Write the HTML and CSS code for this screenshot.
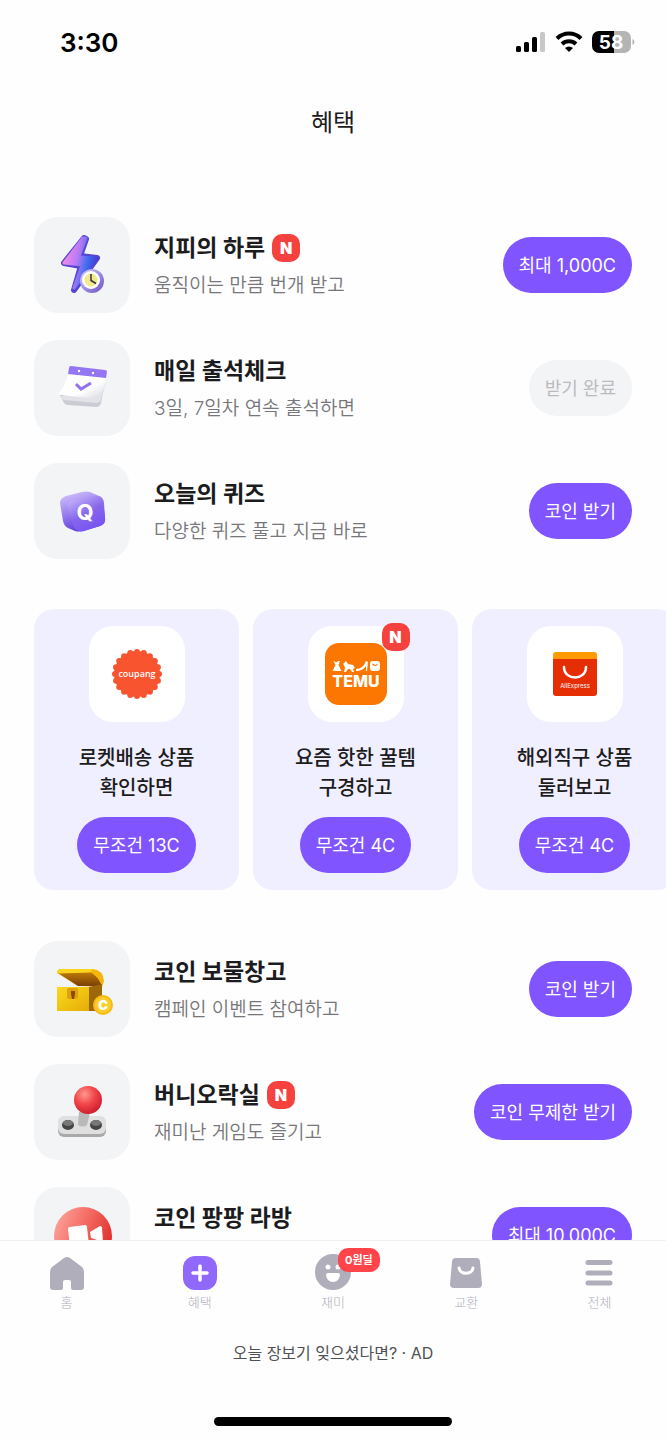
FILE: index.html
```html
<!DOCTYPE html>
<html lang="ko">
<head>
  <meta charset="UTF-8">
  <meta name="viewport" content="width=device-width, initial-scale=1.0">
  <title>혜택</title>
  <link rel="stylesheet" href="styles.css">
</head>
<body>

  <div class="status-bar">
    <span class="time">3:30</span>
    <div class="status-icons">
      <svg width="30" height="22" viewBox="0 0 30 22">
        <rect x="0" y="15" width="5" height="6" rx="1.5"/>
        <rect x="8" y="11" width="5" height="10" rx="1.5"/>
        <rect x="16" y="6" width="5" height="15" rx="1.5"/>
        <rect x="24" y="1" width="5" height="20" rx="1.5" fill="#c8c8c8"/>
      </svg>
      <svg width="28" height="22" viewBox="0 0 28 22">
        <path d="M2 7.500a17 17 0 0 1 24 0M7 13a10.500 10.500 0 0 1 14 0" fill="none" stroke="#000" stroke-width="4"/>
        <path d="M14 21l-4-4a6 6 0 0 1 8 0z"/>
      </svg>
      <svg width="43" height="22" viewBox="0 0 43 22">
        <path d="M22 0H7a7 7 0 0 0-7 7v8a7 7 0 0 0 7 7h15z"/>
        <path d="M22 0h10a7 7 0 0 1 7 7v8a7 7 0 0 1-7 7H22z" fill="#b4b4b4"/>
        <path d="M40.500 8c2.500 1 2.500 5 0 6z" fill="#b4b4b4"/>
        <text class="battery-text" x="19" y="18" text-anchor="middle">58</text>
      </svg>
    </div>
  </div>

  <header>
    <h1>혜택</h1>
  </header>

  <main>
    <ul class="list">
      <li class="row">
        <div class="tile">
          <svg viewBox="0 0 96 96">
            <defs>
              <linearGradient id="bolt" x1="0" y1=".3" x2="1" y2=".6">
                <stop offset="0" stop-color="#f58be8"/>
                <stop offset=".4" stop-color="#b77af5"/>
                <stop offset=".7" stop-color="#3f6cf0"/>
                <stop offset="1" stop-color="#4638c8"/>
              </linearGradient>
              <linearGradient id="ring" x1="0" y1="0" x2="1" y2="1">
                <stop offset="0" stop-color="#d5cdfb"/>
                <stop offset="1" stop-color="#6a50c4"/>
              </linearGradient>
            </defs>
            <path d="M50 21L30 46l17 3-7 24 23-32-17-2 6-17z" fill="url(#bolt)" stroke="#5545cf" stroke-width="6" stroke-linejoin="round"/>
            <path d="M49 21L30 46l18 2-8 23 23-30-18-1 7-19z" fill="url(#bolt)" stroke="url(#bolt)" stroke-width="3" stroke-linejoin="round"/>
            <circle cx="58" cy="64" r="12" fill="url(#ring)"/>
            <circle cx="57" cy="63" r="9" fill="#fff"/>
            <circle cx="57" cy="63" r="6.500" fill="#f2e98a"/>
            <path d="M57 57v6.500l5 3" fill="none" stroke="#33304a" stroke-width="1.500"/>
          </svg>
        </div>
        <div class="info">
          <h2>지피의 하루 <span class="badge">N</span></h2>
          <p>움직이는 만큼 번개 받고</p>
        </div>
        <button class="pill">최대 1,000C</button>
      </li>
      <li class="row">
        <div class="tile">
          <svg viewBox="0 0 96 96">
            <defs>
              <linearGradient id="page" x1="0" y1="0" x2="1" y2="1">
                <stop offset=".6" stop-color="#fff"/>
                <stop offset="1" stop-color="#d8d7e2"/>
              </linearGradient>
            </defs>
            <path d="M26 55l4 8q1 2 4 2l28 2q4 0 5-4l5-26z" fill="#cbcbd3"/>
            <path d="M26 57l4 3 32 3q4 0 5-4l5-16z" fill="#e2e2e8"/>
            <path d="M34 34l38 4q-1 19-17 20L27 55q-3-1-1-3 6-8 8-18z" fill="url(#page)"/>
            <path d="M35 28q0-2 2-2l34 4q2 0 2 2l-1 6-38-4z" fill="#9476f5"/>
            <circle cx="45" cy="31" r="1.200" fill="#fff"/>
            <circle cx="59" cy="33" r="1.200" fill="#fff"/>
            <path d="M42 44l5 5 10-6" fill="none" stroke="#9270f2" stroke-width="3"/>
          </svg>
        </div>
        <div class="info">
          <h2>매일 출석체크</h2>
          <p>3일, 7일차 연속 출석하면</p>
        </div>
        <button class="pill done" disabled>받기 완료</button>
      </li>
      <li class="row">
        <div class="tile">
          <svg viewBox="0 0 96 96">
            <defs>
              <linearGradient id="side" x1="0" y1="0" x2=".4" y2="1">
                <stop offset="0" stop-color="#d9ccfd"/>
                <stop offset="1" stop-color="#5f3be0"/>
              </linearGradient>
              <linearGradient id="face" x1=".2" y1="0" x2=".8" y2="1">
                <stop offset="0" stop-color="#c4b2fa"/>
                <stop offset=".5" stop-color="#8766ea"/>
                <stop offset="1" stop-color="#7550f5"/>
              </linearGradient>
            </defs>
            <path d="M26 40q0-5 6-7l16-4q4-1 8 0l9 4q5 2 5 7l1 15q0 6-5 8l-16 5q-5 1-9 0l-7-3q-4-2-5-7z" fill="url(#side)"/>
            <path d="M34 44q-1-6 5-7l22-4q7-1 8 5l2 17q1 6-5 8l-17 5q-8 1-10-6z" fill="url(#face)"/>
            <text class="quiz-text" x="51" y="57" text-anchor="middle">Q</text>
          </svg>
        </div>
        <div class="info">
          <h2>오늘의 퀴즈</h2>
          <p>다양한 퀴즈 풀고 지금 바로</p>
        </div>
        <button class="pill">코인 받기</button>
      </li>
    </ul>

    <div class="cards">
      <div class="card">
        <div class="tile white">
          <svg viewBox="0 0 96 96">
            <circle cx="48" cy="48" r="23" fill="#f8542f"/>
            <circle cx="48" cy="48" r="22" fill="none" stroke="#f8542f" stroke-width="6" stroke-linecap="round" stroke-dasharray="0 2" pathLength="40"/>
            <text class="coupang-text" x="48" y="51" text-anchor="middle">coupang</text>
          </svg>
        </div>
        <p>로켓배송 상품<br>확인하면</p>
        <button class="pill">무조건 13C</button>
      </div>
      <div class="card">
        <div class="tile white">
          <svg viewBox="0 0 96 96">
            <rect x="17" y="17" width="62" height="62" rx="14" fill="#fb7701"/>
            <g fill="#fff">
              <path d="M26 35l2 1.500 2-1.500h2l-1.500 4 3 6h-9l3-6-2-4z"/>
              <path d="M35 38l3-3 2 3 5 1 2 3-2 1 1 3h-2l-2-3h-2l-2 3h-2l1-4-1-3z"/>
              <path d="M48 43q7 0 10-8l2 1-1 9h-1v-5q-3 5-10 5z"/>
              <path d="M62 38q0-3 3-3h4q3 0 3 3v4q0 3-3 3h-4q-3 0-3-3z"/>
            </g>
            <path d="M64.500 38q3 3 5 0" fill="none" stroke="#fb7701" stroke-width="1.200"/>
            <text class="temu-text" x="48" y="61" text-anchor="middle">TEMU</text>
          </svg>
          <span class="badge corner">N</span>
        </div>
        <p>요즘 핫한 꿀템<br>구경하고</p>
        <button class="pill">무조건 4C</button>
      </div>
      <div class="card">
        <div class="tile white">
          <svg viewBox="0 0 96 96">
            <rect x="26" y="26" width="44" height="20" rx="3" fill="#ff9a00"/>
            <path d="M26 33h44v34q0 3-3 3H29q-3 0-3-3z" fill="#e62e04"/>
            <path d="M37 41c0 14 22 14 22 0" fill="none" stroke="#fff" stroke-width="2.500" stroke-linecap="round"/>
            <text class="ali-text" x="48" y="62" text-anchor="middle">AliExpress</text>
          </svg>
        </div>
        <p>해외직구 상품<br>둘러보고</p>
        <button class="pill">무조건 4C</button>
      </div>
    </div>

    <ul class="list">
      <li class="row">
        <div class="tile">
          <svg viewBox="0 0 96 96">
            <defs>
              <linearGradient id="gold" x1="0" y1="0" x2="1" y2="1">
                <stop offset="0" stop-color="#fbd91c"/>
                <stop offset="1" stop-color="#e5ad07"/>
              </linearGradient>
              <linearGradient id="inside" x1="0" y1="0" x2="0" y2="1">
                <stop offset="0" stop-color="#c07a08"/>
                <stop offset="1" stop-color="#7a3f05"/>
              </linearGradient>
            </defs>
            <path d="M23 32q0-4 4-4h32q10 1 11 12l-2 6-24-1z" fill="#f4b60c"/>
            <path d="M24 32l32-1q8 4 12 14H44z" fill="url(#inside)"/>
            <path d="M23 31q1-3 4-3h32l-3 3.500-32 1z" fill="#fbd51d"/>
            <path d="M55 46l13-3v27H55z" fill="#9c6808"/>
            <path d="M23 46h32v24H23z" fill="url(#gold)"/>
            <rect x="33" y="47" width="11" height="11" rx="2" fill="#dfa00c"/>
            <path d="M37 50h4v3l-1 5h-2l-1-5z" fill="#8b4a06"/>
            <circle cx="69" cy="64" r="10" fill="#f6b916"/>
            <circle cx="69" cy="64" r="8" fill="#f9ce2a"/>
            <text class="coin-text" x="69" y="69" text-anchor="middle">C</text>
          </svg>
        </div>
        <div class="info">
          <h2>코인 보물창고</h2>
          <p>캠페인 이벤트 참여하고</p>
        </div>
        <button class="pill">코인 받기</button>
      </li>
      <li class="row">
        <div class="tile">
          <svg viewBox="0 0 96 96">
            <defs>
              <radialGradient id="ball" cx=".38" cy=".3" r=".7">
                <stop offset="0" stop-color="#ff9a90"/>
                <stop offset=".5" stop-color="#f2484b"/>
                <stop offset="1" stop-color="#cf1f2f"/>
              </radialGradient>
              <linearGradient id="disc" x1="0" y1=".2" x2="1" y2=".6">
                <stop offset="0" stop-color="#fba49c"/>
                <stop offset=".5" stop-color="#f46a62"/>
                <stop offset="1" stop-color="#e02f2c"/>
              </linearGradient>
            </defs>
            <rect x="24" y="55" width="48" height="18" rx="6" fill="#a9a9a9"/>
            <rect x="24" y="52" width="48" height="18" rx="6" fill="#dfdfdf"/>
            <ellipse cx="34" cy="61" rx="6" ry="5" fill="#444"/>
            <ellipse cx="34" cy="59" rx="5" ry="3" fill="#777"/>
            <ellipse cx="62" cy="61" rx="6" ry="5" fill="#444"/>
            <ellipse cx="62" cy="59" rx="5" ry="3" fill="#777"/>
            <path d="M45 48h11l-3 13q-4 3-9 0z" fill="#b9b9b9"/>
            <circle cx="54" cy="36" r="14" fill="url(#ball)"/>
          </svg>
        </div>
        <div class="info">
          <h2>버니오락실 <span class="badge">N</span></h2>
          <p>재미난 게임도 즐기고</p>
        </div>
        <button class="pill">코인 무제한 받기</button>
      </li>
      <li class="row">
        <div class="tile">
          <svg viewBox="0 0 96 96">
            <circle cx="49" cy="49" r="29" fill="url(#disc)"/>
            <path d="M34 42q0-2 2-2l15-2q2 0 2 2l2 18q0 2-2 2l-15 2q-2 0-2-2z" fill="#fff"/>
            <path d="M56 45l10-6q2 0 2 2l1 14-12-4z" fill="#fff"/>
          </svg>
        </div>
        <div class="info">
          <h2>코인 팡팡 라방</h2>
          <p></p>
        </div>
        <button class="pill">최대 10,000C</button>
      </li>
    </ul>
  </main>

  <footer>
    <nav>
      <a href="#">
        <svg viewBox="0 0 36 36"><path d="M15 3q3-2 6 0l12 9q2 2 2 5v15q0 3-3 3h-8q-2 0-2-2v-6q0-2-2-2h-4q-2 0-2 2v6q0 2-2 2H4q-3 0-3-3V17q0-3 2-5z"/></svg>
        <span>홈</span>
      </a>
      <a href="#">
        <svg viewBox="0 0 36 36">
          <rect x="1" y="1" width="34" height="34" rx="12" fill="#9069fa"/>
          <path d="M18 11v14M11 18h14" stroke="#fff" stroke-width="3.500" stroke-linecap="round"/>
        </svg>
        <span>혜택</span>
      </a>
      <a href="#">
        <svg viewBox="0 0 36 36">
          <circle cx="18" cy="17" r="18"/>
          <circle cx="13" cy="12" r="2.500" fill="#fff"/>
          <circle cx="23" cy="12" r="2.500" fill="#fff"/>
          <path d="M13 18h10q2 0 2 2-1 7-7 7t-7-7q0-2 2-2z" fill="#fff"/>
        </svg>
        <span>재미</span>
        <em class="deal">0원딜</em>
      </a>
      <a href="#">
        <svg viewBox="0 0 36 36">
          <path d="M8 3h20q4 0 4 4l2 22q0 4-4 4H6q-4 0-4-4L4 7q0-4 4-4z"/>
          <path d="M11 13c1 7 13 7 14 0" fill="none" stroke="#fff" stroke-width="3" stroke-linecap="round"/>
        </svg>
        <span>교환</span>
      </a>
      <a href="#">
        <svg viewBox="0 0 36 36"><path d="M7 7.500h22M7 18h22M7 28h22" stroke="#b0aebb" stroke-width="5" stroke-linecap="round"/></svg>
        <span>전체</span>
      </a>
    </nav>
    <p class="ad">오늘 장보기 잊으셨다면? · AD</p>
    <div class="home-indicator"></div>
  </footer>

</body>
</html>
```

FILE: styles.css
```css
* {
  box-sizing: border-box;
}

body {
  margin: 0;
  height: 100vh;
  display: flex;
  flex-direction: column;
  background-color: #fefefe;
  color: #1c1c20;
  font-family: Inter, "Noto Sans CJK KR", sans-serif;
}

h1, h2, p, ul {
  margin: 0;
  padding: 0;
}

/* status bar */
.status-bar {
  display: flex;
  flex-shrink: 0;
  align-items: center;
  justify-content: space-between;
  height: 84px;
  padding: 0 31px 0 60px;
}

.time {
  font-size: 26px;
  font-weight: 600;
  color: #000;
}

.status-icons {
  display: flex;
  align-items: center;
  gap: 9px;
}

.battery-text {
  fill: #fff;
  font-size: 19px;
  font-weight: 700;
}

header {
  flex-shrink: 0;
}

h1 {
  line-height: 78px;
  font-size: 24px;
  font-weight: 400;
  text-align: center;
}

/* content */
main {
  flex: 1;
  min-height: 0;
  padding-top: 55px;
  overflow-y: auto;
  scrollbar-width: none;
}

.list {
  display: flex;
  flex-direction: column;
  gap: 27px;
  padding: 0 34px;
  list-style: none;
}

.row {
  display: flex;
  align-items: center;
}

.tile {
  position: relative;
  flex-shrink: 0;
  width: 96px;
  height: 96px;
  border-radius: 24px;
  background-color: #f3f4f6;
}

.tile.white {
  background-color: #fff;
}

.tile svg {
  display: block;
}

.info {
  flex: 1;
  padding: 6px 0 0 24px;
}

h2 {
  display: flex;
  align-items: center;
  gap: 7px;
  line-height: 36px;
  font-size: 23px;
  font-weight: 700;
}

.info p {
  min-height: 40px;
  line-height: 40px;
  font-size: 19px;
  font-weight: 350;
  color: #77777b;
}

.badge {
  width: 28px;
  height: 28px;
  border-radius: 10px;
  background-color: #f6423f;
  color: #fff;
  line-height: 28px;
  font-size: 16px;
  font-weight: 900;
  text-align: center;
}

.badge.corner {
  position: absolute;
  top: -3px;
  right: -6px;
}

.pill {
  height: 56px;
  padding: 0 16px 2px;
  border: none;
  border-radius: 28px;
  background-color: #8055ff;
  color: #fff;
  font-family: inherit;
  font-size: 18px;
  white-space: nowrap;
  cursor: pointer;
}

.pill.done {
  background-color: #f3f4f6;
  color: #bbbbbf;
  cursor: default;
}

/* horizontal cards */
.cards {
  display: flex;
  gap: 14px;
  margin: 50px 0 51px;
  padding: 0 34px;
  overflow-x: auto;
  scrollbar-width: none;
}

.card {
  display: flex;
  flex-direction: column;
  flex-shrink: 0;
  align-items: center;
  width: 205px;
  padding: 17px 0;
  border-radius: 20px;
  background-color: #f0efff;
}

.card p {
  margin: 21px 0 14px;
  line-height: 30px;
  font-size: 20px;
  font-weight: 500;
  text-align: center;
}

/* texts inside the icons */
.quiz-text {
  fill: #fff;
  font-size: 22px;
  font-weight: 700;
}

.coupang-text {
  fill: #fff;
  font-family: "Open Sans", sans-serif;
  font-size: 9px;
  font-weight: 600;
}

.temu-text {
  fill: #fff;
  font-size: 16px;
  font-weight: 800;
}

.ali-text {
  fill: #fff;
  font-size: 6px;
}

.coin-text {
  fill: #fff;
  font-size: 13px;
  font-weight: 900;
}

/* bottom tabs */
footer {
  flex-shrink: 0;
  border-top: 1px solid #f1f1f3;
  background-color: #fefefe;
}

nav {
  display: flex;
  padding-top: 14px;
}

nav a {
  position: relative;
  display: flex;
  flex: 1;
  flex-direction: column;
  align-items: center;
  gap: 2px;
  color: #b0aebb;
  line-height: 18px;
  font-size: 13px;
  font-weight: 300;
  text-decoration: none;
}

nav svg {
  width: 36px;
  height: 36px;
  fill: #b0aebb;
  overflow: visible;
}

.deal {
  position: absolute;
  top: -7px;
  left: calc(50% + 5px);
  padding: 0 7px;
  border-radius: 10px;
  background-color: #ff4549;
  color: #fff;
  line-height: 24px;
  font-size: 11px;
  font-style: normal;
  font-weight: 700;
}

.ad {
  margin-top: 30px;
  line-height: 24px;
  font-size: 16px;
  color: #505054;
  text-align: center;
}

.home-indicator {
  width: 238px;
  height: 9px;
  margin: 52px auto 14px;
  border-radius: 5px;
  background-color: #000;
}
```
